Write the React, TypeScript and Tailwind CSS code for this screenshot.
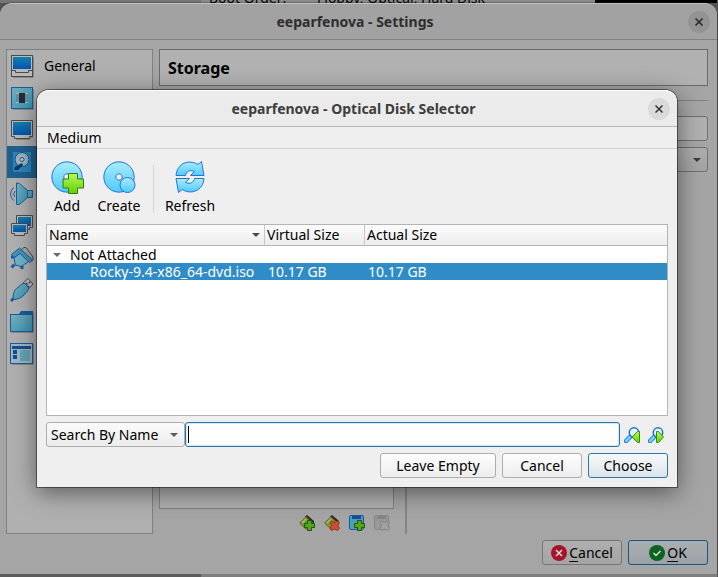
import type { ReactNode } from "react";

const BLUE = "#1b5c9e";

function Gradients() {
  return (
    <svg className="absolute h-0 w-0" aria-hidden="true">
      <defs>
        <linearGradient id="sky" x1="0" y1="0" x2="0" y2="1">
          <stop offset="0" stopColor="#a9ecff" />
          <stop offset="1" stopColor="#4fcbff" />
        </linearGradient>
        <linearGradient id="lime" x1="0" y1="0" x2="0" y2="1">
          <stop offset="0" stopColor="#b5f860" />
          <stop offset="1" stopColor="#63d100" />
        </linearGradient>
        <linearGradient id="screen" x1="0" y1="0" x2="0" y2="1">
          <stop offset="0" stopColor="#157fb0" />
          <stop offset="1" stopColor="#0354ae" />
        </linearGradient>
        <linearGradient id="dimSky" x1="0" y1="0" x2="1" y2="1">
          <stop offset="0" stopColor="#78aebb" />
          <stop offset="1" stopColor="#3795b5" />
        </linearGradient>
      </defs>
    </svg>
  );
}

function PageIcon({ children }: { children: ReactNode }) {
  return (
    <svg viewBox="0 0 24 24" className="h-6 w-6 shrink-0" aria-hidden="true">
      {children}
    </svg>
  );
}

const GeneralIcon = () => (
  <PageIcon>
    <path d="M3 23.500h20.500V3" fill="none" stroke="#888" />
    <rect x="1.500" y="1.500" width="21" height="21" fill="#b9b9b9" stroke="#4b4b4b" />
    <rect x="3" y="3" width="18" height="12" fill="url(#screen)" />
    <path d="M1.500 16.500h4v2h13v-2h4" fill="none" stroke="#4b4b4b" />
  </PageIcon>
);

const SystemIcon = () => (
  <PageIcon>
    <path d="M3 23.500h20.500V3" fill="none" stroke="#888" />
    <rect x="1.500" y="1.500" width="21" height="21" fill="url(#dimSky)" stroke={BLUE} />
    <path d="M6 8h12M6 10h12M6 12h12M6 14h12M6 16h12" stroke="#d4e4ea" />
    <path d="M6 9h12M6 11h12M6 13h12M6 15h12" stroke="#285c8c" />
    <rect x="9" y="7" width="6" height="10" fill="#282a35" />
  </PageIcon>
);

const DisplayIcon = () => (
  <PageIcon>
    <path d="M1.500 2.500h21v16h-3v2h-15v-2h-3z" fill="#b9b9b9" stroke="#4b4b4b" />
    <rect x="3" y="4" width="18" height="13" fill="url(#screen)" />
    <path d="M6 21.500h14v-2h3" fill="none" stroke="#888" />
  </PageIcon>
);

const StorageIcon = () => (
  <PageIcon>
    <rect x="2.500" y="1.500" width="19" height="21" rx="1" fill="#2a86ba" stroke="#1d5f9e" />
    <circle cx="12" cy="9.500" r="7" fill="#a4b9c1" stroke="#174f8d" />
    <circle cx="12" cy="9.500" r="5" fill="none" stroke="#8aa9b8" />
    <circle cx="12" cy="9.500" r="2" fill="#b9d3dc" stroke="#174f8d" />
    <path d="M4 20l1-3 7-4 1 2-5 5z" fill="#0d3565" />
  </PageIcon>
);

const AudioIcon = () => (
  <PageIcon>
    <path d="M17.500 8.500h5v7h-5" fill="url(#dimSky)" stroke={BLUE} />
    <path d="M6.500 1v21.500h3l8-7v-7l-8-7z" fill="url(#dimSky)" stroke={BLUE} />
    <path d="M3.500 5.500q-6 6.500 0 13M5 9q-3 3 0 6" fill="none" stroke={BLUE} />
  </PageIcon>
);

const NetworkIcon = () => (
  <PageIcon>
    <path d="M6.500 1.500h16v12h-3v2h-10v-2h-3z" fill="#b9b9b9" stroke="#4b4b4b" />
    <rect x="8" y="3" width="13" height="9" fill="url(#screen)" />
    <path d="M1.500 9.500h16v10h-3v2h-10v-2h-3z" fill="#b9b9b9" stroke="#4b4b4b" />
    <rect x="3" y="11" width="13" height="7" fill="url(#screen)" />
  </PageIcon>
);

const SerialIcon = () => (
  <PageIcon>
    <path d="M11 4l3-2.500h2l7 9.500v3l-4 2z" fill="#a8a8a8" stroke="#4b4b4b" />
    <path d="M1.500 21.500l3-3M12 20v3M4 11H1" stroke={BLUE} strokeWidth="3" />
    <path d="M4 12.500L10 6l9.500 9-8.500 5.500-5.500-1.500z" fill="#6cb3cb" stroke={BLUE} />
    <path d="M1.500 8.500L9.500 2l13 12-3 2.500L10 7.500l-6 4z" fill="#4592b8" stroke={BLUE} />
  </PageIcon>
);

const UsbIcon = () => (
  <PageIcon>
    <path d="M12.500 5.500l5.500-5 5 5.500-5.500 6z" fill="#bbb" stroke="#555" />
    <path d="M16 5l1.500 1.500M19 4l1 1M18 8l1 1" stroke="#333" strokeWidth="1.500" />
    <path d="M1 23l4-4" stroke={BLUE} strokeWidth="3" />
    <path d="M3 20.500Q3 13 6.500 10.500L12 6q2-1.500 3.500 0L18 9q1.500 1.500 0 3.500l-5 5.500Q10 21 5 21.500z" fill="url(#dimSky)" stroke={BLUE} />
  </PageIcon>
);

const FolderIcon = () => (
  <PageIcon>
    <path d="M0 4h9l2-3h12v21H0z" fill={BLUE} />
    <rect x="1" y="5" width="21" height="16" fill="url(#dimSky)" />
    <path d="M1 22.500h22.500V3" fill="none" stroke="#888" />
  </PageIcon>
);

const InterfaceIcon = () => (
  <PageIcon>
    <path d="M2 22.500h21.500V2" fill="none" stroke="#888" />
    <rect x=".5" y="1.500" width="22" height="20" fill="#9eb7c0" stroke={BLUE} />
    <path d="M2 5.500h19" stroke="#174d92" strokeWidth="3" />
    <path d="M3 10h4M3 15h4" stroke="#174d92" strokeWidth="4" />
    <rect x="10" y="8" width="10" height="11" fill="#66a3b5" />
  </PageIcon>
);

const pages = [
  { name: "General", icon: <GeneralIcon /> },
  { name: "System", icon: <SystemIcon /> },
  { name: "Display", icon: <DisplayIcon /> },
  { name: "Storage", icon: <StorageIcon /> },
  { name: "Audio", icon: <AudioIcon /> },
  { name: "Network", icon: <NetworkIcon /> },
  { name: "Serial Ports", icon: <SerialIcon /> },
  { name: "USB", icon: <UsbIcon /> },
  { name: "Shared Folders", icon: <FolderIcon /> },
  { name: "User Interface", icon: <InterfaceIcon /> },
];

const discRing =
  "M16 .8a15.200 15.200 0 1 0 .01 0zM16 12.800a3.200 3.200 0 1 1-.01 0z";

const AddIcon = () => (
  <svg viewBox="0 0 32 32" className="h-8 w-8 overflow-visible" aria-hidden="true">
    <path d={discRing} fill="url(#sky)" stroke="#2873d2" fillRule="evenodd" />
    <path d="M17.500 12.500h9v5.500h6v9h-6v5.500h-9v-5.500h-5.500v-9h5.500z" fill="url(#lime)" stroke="#327d0a" />
  </svg>
);

const CreateIcon = () => (
  <svg viewBox="0 0 32 32" className="h-8 w-8 overflow-visible" aria-hidden="true">
    <path d={discRing} fill="url(#sky)" stroke="#2873d2" fillRule="evenodd" />
    <circle cx="24.500" cy="24" r="7.500" fill="url(#sky)" stroke="#2873d2" />
  </svg>
);

const RefreshIcon = () => (
  <svg viewBox="0 0 32 32" className="h-8 w-8" aria-hidden="true">
    <g fill="url(#sky)" stroke="#2873d2" strokeLinejoin="round">
      <path d="M2 14.500C3 2 15-2 24 3.500L27.500.5l2.500 14H16.500l4-4c-4.500-2-8.500 0-9 4z" />
      <path d="M30 17.500C29 30 17 34 8 28.500l-3.500 3-2.500-14h13.500l-4 4c4.500 2 8.500 0 9-4z" />
    </g>
  </svg>
);

function FindIcon({ forward = false }: { forward?: boolean }) {
  return (
    <svg viewBox="0 0 16 16" className="h-4 w-4" aria-hidden="true">
      <path d="M2 14l4.500-4.500" stroke="#176fdc" strokeWidth="4.500" strokeLinecap="round" />
      <path d="M2 14l4-4" stroke="#79d5ff" strokeWidth="2.500" strokeLinecap="round" />
      <circle cx="10" cy="5.500" r="4.700" fill="#e5f4ff" stroke="#1870d5" strokeWidth="1.500" />
      <path
        d={forward ? "M8.500 4.500v11h2l5-5.500-5-5.500z" : "M15.500 4.500v11h-2L8 10l5.500-5.500z"}
        fill="url(#lime)" stroke="#348c08"
      />
    </svg>
  );
}

const cross = "M6 7.500L7.500 6l3 1.500 3-1.500L15.500 7.500 14 10.500l1.500 3-2 2-3-1.500-3 1.500-1.500-2 1.500-3z";
const plus = "M8.500 5.500h4v3h3v4h-3v3h-4v-3h-3v-4h3z";

function ControllerIcon({ remove = false }: { remove?: boolean }) {
  return (
    <svg viewBox="0 0 16 16" className="h-4 w-4" aria-hidden="true">
      <path d="M6 1.500L8 0l7 6v3z" fill="#292929" />
      <path d="M.7 8L7 1.700 13.300 8 7 14.300z" fill="#61a13b" stroke="#a8431f" />
      <path d="M3 8l4-4" stroke="#9cc67b" strokeWidth="1.500" />
      <path d={remove ? cross : plus} fill={remove ? "#c8502f" : "#54a518"} stroke={remove ? "#97351c" : "#1f5907"} />
    </svg>
  );
}

function AttachmentIcon({ remove = false }: { remove?: boolean }) {
  return (
    <svg viewBox="0 0 16 16" className="h-4 w-4" aria-hidden="true">
      <rect x=".5" y=".5" width="14" height="14" rx="1.500" fill={remove ? "#999" : "#4b9fbd"} stroke={remove ? "#888" : "#185b9d"} />
      <rect x="3" y="1" width="9" height="3" fill={remove ? "#858585" : "#174d92"} />
      <path d={remove ? cross : plus} fill={remove ? "#a0a0a0" : "#54a518"} stroke={remove ? "#808080" : "#1f5907"} />
    </svg>
  );
}

function Arrow({ className = "" }: { className?: string }) {
  return (
    <svg viewBox="0 0 8 4" className={`h-1 w-2 shrink-0 ${className}`} aria-hidden="true">
      <path d="M0 0h8L4 4z" fill="currentColor" />
    </svg>
  );
}

function CloseButton({ label, className }: { label: string; className: string }) {
  return (
    <button aria-label={label} className={`flex h-[22px] w-[22px] items-center justify-center rounded-full ${className}`}>
      <svg viewBox="0 0 8 8" className="h-2 w-2" aria-hidden="true">
        <path d="M.5.5l7 7M7.500.5l-7 7" stroke="currentColor" strokeWidth="1.500" />
      </svg>
    </button>
  );
}

const dialogButton =
  "h-[25px] rounded-[3px] border bg-linear-to-b leading-5";

function SettingsWindow() {
  return (
    <section
      aria-label="Settings"
      className="flex flex-1 flex-col rounded-t-xl border-t border-[#c0c0c0] bg-[#a5a5a5] shadow-[0_0_2px_#222]"
    >
      <header className="grid h-9 shrink-0 grid-cols-[1fr_auto_1fr] items-center rounded-t-xl border-b border-[#828282] bg-[#a2a2a2] pr-[7px]">
        <h1 className="col-start-2 text-sm font-bold text-[#2e2e2e]">eeparfenova - Settings</h1>
        <CloseButton label="Close settings" className="justify-self-end bg-[#939393] text-[#262626]" />
      </header>
      <div className="flex flex-1 gap-1.5 pt-[9px] pr-[9px] pl-1.5">
        <nav aria-label="Pages" className="w-[147px] border border-[#808080] bg-[#b0b0b0]">
          {pages.map((page, i) => (
            <button
              key={page.name}
              aria-label={page.name}
              className={`flex h-8 w-full items-center gap-2.5 pl-[3px] ${i === 3 ? "bg-[#20618e]" : ""}`}
            >
              {page.icon}
              {i === 0 && <span>{page.name}</span>}
            </button>
          ))}
        </nav>
        <div className="flex flex-1 flex-col">
          <h2 className="flex h-[37px] items-center border border-[#6c6c6c] bg-[#b1b1b1] pl-2 text-base font-bold">
            Storage
          </h2>
          <div className="flex flex-1 pt-3.5">
            <div className="flex w-[235px] flex-col">
              <div className="flex-1 border border-[#808080] bg-[#b0b0b0]" />
              <div className="flex h-[25px] items-center justify-end gap-[9px] pt-0.5 pr-1">
                <button aria-label="Add controller"><ControllerIcon /></button>
                <button aria-label="Remove controller"><ControllerIcon remove /></button>
                <button aria-label="Add attachment"><AttachmentIcon /></button>
                <button aria-label="Remove attachment" disabled><AttachmentIcon remove /></button>
              </div>
            </div>
            <div className="mx-[11px] w-0.5 bg-[#858585]" />
            <div className="flex-1 border-t border-[#828282] pt-[15px]">
              <input
                aria-label="Name"
                className="block h-[25px] w-full rounded-[3px] border border-[#707070] bg-[#b0b0b0] outline-none"
              />
              <div className="relative mt-1.5">
                <select
                  aria-label="Type"
                  className="block h-[25px] w-full appearance-none rounded-[3px] border border-[#707070] bg-linear-to-b from-[#adadad] to-[#a3a3a3] outline-none"
                />
                <Arrow className="pointer-events-none absolute top-[11px] right-[7px] text-[#3b3b3b]" />
              </div>
            </div>
          </div>
        </div>
      </div>
      <footer className="flex justify-end gap-1.5 pt-1.5 pr-[9px] pb-[9px]">
        <button className={`${dialogButton} flex w-20 items-center justify-center gap-0.5 border-[#767676] from-[#afafaf] to-[#a4a4a4]`}>
          <svg viewBox="0 0 16 16" className="h-4 w-4" aria-hidden="true">
            <circle cx="8" cy="8" r="8" fill="#a51528" />
            <path d="M5 5l6 6M11 5l-6 6" stroke="#ddd" strokeWidth="1.500" />
          </svg>
          <span><u className="underline-offset-3">C</u>ancel</span>
        </button>
        <button className={`${dialogButton} flex w-20 items-center justify-center gap-0.5 border-[#1b5379] from-[#aaaeb1] to-[#9ba2a7]`}>
          <svg viewBox="0 0 16 16" className="h-4 w-4" aria-hidden="true">
            <circle cx="8" cy="8" r="8" fill="#0c6420" />
            <path d="M4.500 8l2.500 2.500L11.500 6" fill="none" stroke="#ddd" strokeWidth="1.500" />
          </svg>
          <span><u className="underline-offset-3">O</u>K</span>
        </button>
      </footer>
    </section>
  );
}

function DiskSelector() {
  return (
    <section
      role="dialog"
      aria-label="Optical Disk Selector"
      className="absolute top-[90px] right-[41px] bottom-[90px] left-[37px] flex flex-col rounded-t-xl bg-[#efefef] shadow-[0_0_0_1px_rgba(0,0,0,0.45),0_5px_24px_rgba(0,0,0,0.5)]"
    >
      <header className="grid h-[37px] shrink-0 grid-cols-[1fr_auto_1fr] items-center rounded-t-xl border-t border-b border-t-white border-b-[#b8b8b8] bg-[#ebebeb] pr-[7px]">
        <h2 className="col-start-2 text-sm font-bold text-[#3d3d3d]">eeparfenova - Optical Disk Selector</h2>
        <CloseButton label="Close selector" className="justify-self-end bg-[#dadada] text-[#333]" />
      </header>
      <div role="menubar" className="flex h-[22px] shrink-0 items-center border-b border-[#d2d2d2] pl-2.5">
        <button role="menuitem">Medium</button>
      </div>
      <div role="toolbar" className="flex h-[75px] shrink-0 items-start pt-3 pl-2">
        <button className="flex w-11 flex-col items-center gap-[3px]"><AddIcon />Add</button>
        <button className="flex w-[60px] flex-col items-center gap-[3px]"><CreateIcon />Create</button>
        <div className="mt-1 ml-1 h-12 w-px bg-[#d3d3d3]" />
        <button className="ml-1.5 flex w-[60px] flex-col items-center gap-[3px]"><RefreshIcon />Refresh</button>
      </div>
      <div className="mr-[9px] ml-[9px] flex-1 border border-[#b4b4b4] bg-white">
        <table className="w-full table-fixed border-separate border-spacing-0 text-left">
          <colgroup>
            <col className="w-[218px]" />
            <col className="w-[100px]" />
            <col />
          </colgroup>
          <thead>
            <tr className="h-[21px] bg-linear-to-b from-[#fcfcfc] to-[#ececec] leading-5">
              <th className="border-r border-b border-r-[#c8c8c8] border-b-[#b4b4b4] p-0 pl-0.5 font-normal">
                <div className="flex items-center justify-between pr-1">Name <Arrow className="text-[#4b4b4b]" /></div>
              </th>
              <th className="border-r border-b border-r-[#c8c8c8] border-b-[#b4b4b4] p-0 pl-0.5 font-normal">Virtual Size</th>
              <th className="border-b border-[#b4b4b4] p-0 pl-0.5 font-normal">Actual Size</th>
            </tr>
          </thead>
          <tbody className="leading-[17px]">
            <tr className="h-[17px]">
              <td colSpan={3} className="p-0">
                <div className="flex items-center gap-[9px] pl-1.5"><Arrow className="text-[#6a6a6a]" />Not Attached</div>
              </td>
            </tr>
            <tr className="h-[17px] bg-[#308cc6] text-white">
              <td className="p-0 pl-[43px] whitespace-nowrap">Rocky-9.4-x86_64-dvd.iso</td>
              <td className="p-0 pl-[3px]">10.17 GB</td>
              <td className="p-0 pl-[3px]">10.17 GB</td>
            </tr>
          </tbody>
        </table>
      </div>
      <div className="flex items-center px-[9px] pt-1.5">
        <div className="relative">
          <select
            aria-label="Search mode"
            className="block h-[25px] w-[139px] appearance-none rounded-[3px] border border-[#adadad] bg-linear-to-b from-[#fbfbfb] to-[#ececec] pl-1 outline-none"
          >
            <option>Search By Name</option>
          </select>
          <Arrow className="pointer-events-none absolute top-[11px] right-[7px] text-[#5c5c5c]" />
        </div>
        <div className="relative flex-1">
          <input
            aria-label="Search text"
            className="block h-[25px] w-full rounded-[3px] border border-[#2577a7] bg-white px-1 caret-transparent shadow-[inset_0_0_0_1px_#d6e8f3] outline-none"
          />
          <span className="pointer-events-none absolute top-1 left-[3px] h-[17px] w-px bg-black" />
        </div>
        <button aria-label="Find previous" className="ml-1"><FindIcon /></button>
        <button aria-label="Find next" className="mr-1 ml-2"><FindIcon forward /></button>
      </div>
      <footer className="flex justify-end gap-1.5 px-[9px] pt-1.5 pb-[9px]">
        <button className={`${dialogButton} w-[116px] border-[#adadad] from-[#fdfdfd] to-[#ededed]`}>Leave Empty</button>
        <button className={`${dialogButton} w-20 border-[#adadad] from-[#fdfdfd] to-[#ededed]`}>Cancel</button>
        <button className={`${dialogButton} w-20 border-[#2c78a5] from-[#f6f9fb] to-[#dce4e9]`}>Choose</button>
      </footer>
    </section>
  );
}

export default function App() {
  return (
    <main className="relative flex min-h-screen flex-col overflow-hidden bg-[#555] pr-px font-['Noto_Sans',sans-serif] text-sm text-black">
      <Gradients />
      <div className="flex h-[3px] shrink-0 items-end overflow-hidden bg-black">
        <div className="h-full w-[201px] bg-[#777]" />
        <div className="flex h-[15px] w-[394px] bg-[#8c8c8c] pl-2 leading-5">
          <span className="w-[108px]">Boot Order:</span>
          <span>Floppy, Optical, Hard Disk</span>
        </div>
      </div>
      <SettingsWindow />
      <div className="flex h-[3px] shrink-0">
        <div className="w-[201px] bg-[#5c5c5c]" />
        <div className="flex-1 bg-[#7e7e7e]" />
      </div>
      <DiskSelector />
    </main>
  );
}
